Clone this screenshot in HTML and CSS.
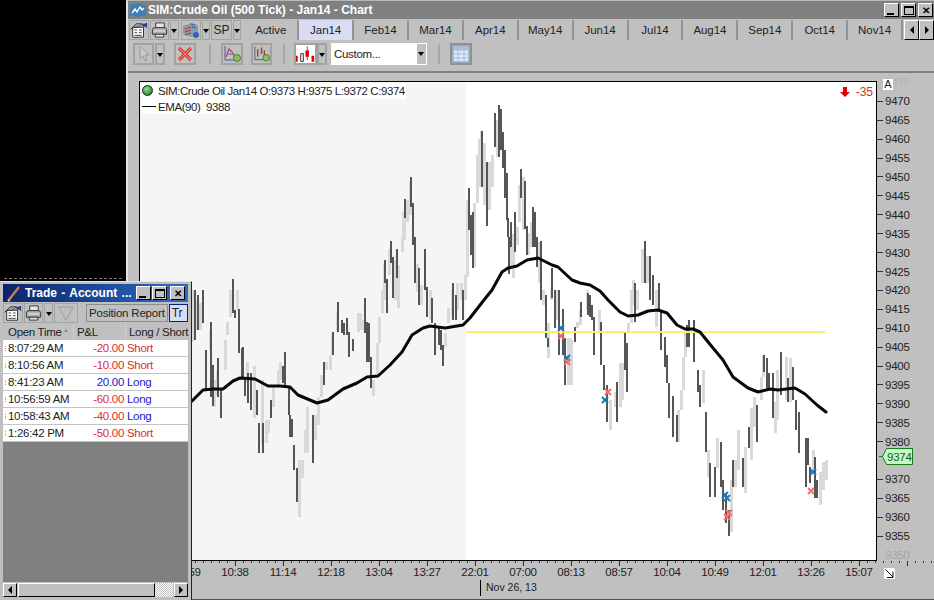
FILE: index.html
```html
<!DOCTYPE html>
<html lang="en">
<head>
  <meta charset="UTF-8" />
  <title>SIM:Crude Oil (500 Tick) - Jan14 - Chart</title>
  <link rel="stylesheet" href="styles.css">
</head>
<body>

  <!-- shared toolbar icons -->
  <svg class="icon-defs" width="0" height="0">
    <defs>
      <symbol id="ico-props" viewBox="0 0 20 18">
        <path d="M3 6h12v11H3z" fill="#fff" stroke="#222"/>
        <path d="M5 9h3M10 9h3M5 12h3M10 12h3M5 15h8" stroke="#333"/>
        <path d="M1 8l6-6h7l-4 4H4z" fill="#9a9a9a" stroke="#222" stroke-width=".8"/>
        <path d="M13 3l6-2v6l-2-2-2 1z" fill="#2a3f8e"/>
      </symbol>
      <symbol id="ico-print" viewBox="0 0 18 18">
        <path d="M5 1.500h9v5H5z" fill="#e8e8e8" stroke="#333"/>
        <path d="M1.500 8.500q0-2 3-2h9q3 0 3 2v5h-15z" fill="#b0b0b0" stroke="#333"/>
        <path d="M3 10h12" stroke="#f0f0f0"/>
        <path d="M4.500 13.500h9v3h-9z" fill="#e8e8e8" stroke="#333"/>
      </symbol>
    </defs>
  </svg>

  <div class="desktop-strip"></div>

  <div class="chart-window">
    <div class="titlebar">
      <svg class="title-icon" width="18" height="16" viewBox="0 0 18 16">
        <path d="M1 3l8-2 8 3v9l-8 2-8-2z" fill="#3d7db8"/>
        <path d="M3 11l3-4 2 3 3-5 2 3 2-2" fill="none" stroke="#fff" stroke-width="1.4"/>
      </svg>
      <span class="title-text">SIM:Crude Oil (500 Tick) - Jan14 - Chart</span>
      <div class="win-buttons">
        <button class="win-btn"><i class="glyph-min"></i></button>
        <button class="win-btn"><i class="glyph-max"></i></button>
        <button class="win-btn win-close">&#10005;</button>
      </div>
    </div>

    <div class="tabs-row">
      <div class="tool-btn tb-props"><svg width="20" height="18"><use href="#ico-props"/></svg></div>
      <div class="tool-btn tb-print"><svg width="18" height="18"><use href="#ico-print"/></svg></div>
      <div class="tool-drop"></div>
      <div class="tool-btn tb-instr">
        <svg width="18" height="18" viewBox="0 0 18 18">
          <path d="M1 5l8-3 7 2v8l-7 4-8-3z" fill="#8e9aa8"/>
          <path d="M3 8l6-2M3 11l6-2M3 14l6-2" stroke="#b04040" stroke-width="1.300"/>
          <path d="M9 3l4 1M10 6l4 1" stroke="#3a70c0" stroke-width="1.300"/>
          <circle cx="14" cy="14" r="3" fill="#2a66b8"/>
        </svg>
      </div>
      <div class="tool-drop"></div>
      <div class="tool-btn tb-sp">SP</div>
      <div class="tool-drop"></div>
      <nav class="tabs">
        <a class="tab">Active</a>
        <a class="tab tab-on">Jan14</a>
        <a class="tab">Feb14</a>
        <a class="tab">Mar14</a>
        <a class="tab">Apr14</a>
        <a class="tab">May14</a>
        <a class="tab">Jun14</a>
        <a class="tab">Jul14</a>
        <a class="tab">Aug14</a>
        <a class="tab">Sep14</a>
        <a class="tab">Oct14</a>
        <a class="tab">Nov14</a>
      </nav>
      <div class="tab-scroll">
        <button class="win-btn scroll-btn"><i class="tri-left"></i></button>
        <button class="win-btn scroll-btn"><i class="tri-right"></i></button>
      </div>
    </div>

    <div class="toolbar">
      <div class="bar-btn">
        <svg width="14" height="18" viewBox="0 0 14 18"><path d="M3 1v13l3-3 2 5 2-1-2-5h4z" fill="#c8c8c8" stroke="#9a9a9a"/></svg>
      </div>
      <div class="bar-drop"></div>
      <div class="bar-btn btn-remove">
        <svg width="16" height="16" viewBox="0 0 16 16"><path d="M2 2l12 12M14 2L2 14" stroke="#e0403a" stroke-width="3.500"/><path d="M2 2l12 12M14 2L2 14" stroke="#f08a80" stroke-width="1"/></svg>
      </div>
      <div class="bar-sep"></div>
      <div class="bar-btn btn-ind">
        <svg width="18" height="18" viewBox="0 0 18 18">
          <path d="M2 1v14h12" fill="none" stroke="#4a5a90"/>
          <path d="M3 12l3-8 3 3 3 5" fill="none" stroke="#b04a6a" stroke-width="1.300"/>
          <path d="M4 9h7" stroke="#4a70c0"/>
          <circle cx="14" cy="13" r="3.500" fill="#8cc060" stroke="#4a7a30"/>
        </svg>
      </div>
      <div class="bar-btn btn-ind2">
        <svg width="18" height="18" viewBox="0 0 18 18">
          <path d="M2 1v14h12" fill="none" stroke="#4a5a90"/>
          <path d="M5 4v8M9 2v7M12 5v6" stroke="#a04040" stroke-width="1.500"/>
          <circle cx="14" cy="13" r="3.500" fill="#8cc060" stroke="#4a7a30"/>
        </svg>
      </div>
      <div class="bar-sep sep-2"></div>
      <div class="bar-btn btn-candle">
        <svg width="22" height="21" viewBox="0 0 22 21">
          <path d="M0 12h2v7H0zM18 12h3v7h-3zM11 6h4v7h-4z" fill="#e00000"/>
          <path d="M13 1v16" stroke="#e00000"/>
          <path d="M5.500 9.500h3v9h-3z" fill="#fff" stroke="#111"/>
        </svg>
      </div>
      <div class="bar-drop drop-candle"></div>
      <div class="combo"><span>Custom...</span><i class="combo-drop"></i></div>
      <div class="bar-sep sep-3"></div>
      <div class="bar-btn btn-table">
        <svg width="18" height="18" viewBox="0 0 18 18">
          <path d="M1 1h16v16H1z" fill="#dfe9f5" stroke="#6f8fc0"/>
          <path d="M2 2h14v3H2z" fill="#a8c0e0"/>
          <path d="M1 5h16M1 9h16M1 13h16M6 5v12M12 5v12" stroke="#a5bcdc"/>
        </svg>
      </div>
    </div>

    <div class="chart-area">
      <div class="plot">
        <svg class="plot-svg" viewBox="140 82 736 478" width="736" height="478" shape-rendering="crispEdges">
          <rect x="140" y="82" width="326" height="478" fill="#f5f5f5"/>
          <path class="bars-light" d="M192 290V342M197 300V330M200 303V330M210 330V350M214 380V407M217 370V395M225 340V370M227 322V335M230 290V317M237 290V310M247 362V383M254 366V418M262 380V445M266 420V443M268 420V433M273 388V407M278 370V385M280 362V380M299 460V517M302 460V478M305 430V453M307 407V453M315 415V440M318 397V425M321 375V397M326 362V370M330 355V370M332 333V355M337 313V332M358 313V332M360 313V330M362 320V330M373 380V396M377 343V377M379 317V343M382 290V313M384 264V300M389 249V275M395 260V300M398 265V308M402 237V252M403 212V237M404 212V240M407 200V222M410 182V215M417 264V292M421 285V305M430 290V320M445 333V347M448 308V323M452 290V318M457 283V310M461 283V300M465 275V300M467 200V277M474 203V267M477 155V203M479 139V187M481 131V176M484 143V205M489 162V210M492 155V187M497 120V157M511 237V267M513 234V278M517 227V245M519 185V222M523 177V230M528 233V255M531 222V247M539 242V283M543 290V305M548 323V358M551 288V300M556 290V320M568 338V385M570 338V385M571 340V385M577 322V328M580 310V325M587 290V310M599 310V333M610 400V430M615 392V407M620 363V407M622 363V400M628 323V333M631 290V323M633 280V305M637 290V310M642 249V283M647 256V283M656 290V327M678 410V442M681 390V410M683 357V390M685 333V357M703 370V403M708 450V477M717 438V468M731 480V532M735 460V487M738 430V470M745 447V493M751 408V460M754 397V427M761 377V400M763 355V377M775 402V433M777 370V420M786 357V400M790 358V402M813 450V473M820 472V505M823 462V490M826 460V480"/>
          <path class="bars-dark" d="M195 290V340M198 295V330M203 290V323M206 350V390M211 322V397M213 365V406M218 358V397M221 390V418M233 279V313M235 310V318M239 309V353M242 348V377M243 347V377M245 377V396M248 373V403M251 373V410M257 390V415M259 423V453M263 423V453M271 400V418M283 366V383M285 352V387M289 387V415M290 415V437M292 419V437M294 445V470M297 468V502M313 415V463M324 362V385M333 332V355M338 302V332M342 320V333M344 323V335M347 318V335M349 332V357M353 339V351M365 298V333M367 322V362M369 323V362M371 357V388M385 260V283M387 279V313M391 241V263M393 257V298M397 249V278M405 199V218M411 177V207M413 203V245M415 237V283M419 268V305M425 249V290M427 287V317M432 298V323M435 323V355M439 328V345M441 330V350M443 345V366M453 283V320M456 295V320M463 290V320M469 188V230M471 215V255M473 212V268M482 131V187M487 162V226M495 113V147M499 105V157M501 109V150M503 132V168M505 150V198M507 173V220M508 218V237M509 237V274M511 222V247M515 212V252M521 169V198M525 181V229M527 226V255M533 207V247M535 212V247M537 237V267M541 241V300M546 295V338M548 338V347M552 268V298M555 290V328M559 290V355M563 309V355M565 338V385M575 327V342M581 302V317M588 293V315M590 295V317M592 305V320M594 317V355M601 322V365M604 365V390M607 385V422M617 382V422M625 333V370M627 343V392M635 283V322M645 241V283M650 256V300M653 275V305M659 283V312M661 310V350M665 337V367M667 355V383M669 383V418M673 396V437M677 415V442M687 325V347M689 320V347M694 320V362M698 370V392M700 385V407M706 412V452M710 463V497M715 467V497M721 442V487M723 480V510M726 493V523M729 510V536M733 460V487M743 458V487M749 427V448M757 405V442M764 355V372M767 358V388M769 373V388M773 373V418M781 352V395M788 378V402M793 367V400M796 400V430M799 412V453M806 438V487M808 438V465M810 467V483M815 457V498M817 480V498"/>
          <path class="level-line" d="M466 332H825"/>
          <g shape-rendering="auto">
            <path class="ema" d="M192 401L203 390 213 389 223 389 233 381 240 378 255 379 268 386 280 386 290 387 298 395 317 403 328 400 343 389 357 383 367 377 378 376 390 365 402 352 412 335 423 328 430 326 445 328 463 325 470 318 484 300 492 290 502 272 508 268 517 266 527 260 538 258 552 265 558 267 572 280 580 283 590 285 600 291 608 300 620 312 628 316 638 315 648 311 658 310 667 313 677 325 685 329 693 329 700 332 713 348 723 360 733 377 748 388 758 392 770 389 778 390 795 388 805 394 817 405 826 412"/>
            <path class="mark-blue" d="M558 325l6 6M564 325l-6 6M564 355l6 6M570 355l-6 6M602 397l6 6M608 397l-6 6M722 492l6 6M728 492l-6 6M724 495l6 6M730 495l-6 6M810 469l6 6M816 469l-6 6"/>
            <path class="mark-red" d="M558 333l6 6M564 333l-6 6M564 359l6 6M570 359l-6 6M605 389l6 6M611 389l-6 6M726 510l6 6M732 510l-6 6M724 514l6 6M730 514l-6 6M808 488l6 6M814 488l-6 6"/>
          </g>
        </svg>

        <div class="legend">
          <div class="legend-row"><i class="led"></i>SIM:Crude Oil Jan14 O:9373 H:9375 L:9372 C:9374</div>
          <div class="legend-row legend-ema"><i class="ema-key"></i>EMA(90)&nbsp; 9388</div>
        </div>
        <div class="delta">
          <svg width="10" height="10" viewBox="0 0 10 10"><path d="M3 0h4v5h3L5 10 0 5h3z" fill="#e00000"/></svg>
          <span>-35</span>
        </div>
      </div>

      <div class="price-axis">
        <span class="price price-off2">9475</span>
        <span class="price">9470</span><span class="price">9465</span><span class="price">9460</span>
        <span class="price">9455</span><span class="price">9450</span><span class="price">9445</span>
        <span class="price">9440</span><span class="price">9435</span><span class="price">9430</span>
        <span class="price">9425</span><span class="price">9420</span><span class="price">9415</span>
        <span class="price">9410</span><span class="price">9405</span><span class="price">9400</span>
        <span class="price">9395</span><span class="price">9390</span><span class="price">9385</span>
        <span class="price">9380</span><span class="price price-gap"></span><span class="price">9370</span>
        <span class="price">9365</span><span class="price">9360</span><span class="price">9355</span>
        <span class="price price-off">9350</span>
        <div class="auto-box">A</div>
        <svg class="last-price" width="38" height="18" viewBox="0 0 38 18">
          <path d="M0 8.500H5" stroke="#1a7a1a"/>
          <path d="M3.500 8.500L7.500 .5H33.500V16.500H7.500z" fill="#c6f7c6" stroke="#1a7a1a"/>
          <text x="8" y="13" class="last-text">9374</text>
        </svg>
      </div>

      <div class="time-axis">
        <div class="time-ticks"></div>
        <div class="time-labels">
          <span>09:59</span><span>10:38</span><span>11:14</span><span>12:18</span><span>13:04</span>
          <span>13:27</span><span>22:01</span><span>07:00</span><span>08:13</span><span>08:57</span>
          <span>10:04</span><span>10:49</span><span>12:01</span><span>13:26</span><span>15:07</span>
        </div>
        <div class="date-row"><span class="date-mark">Nov 26, 13</span></div>
        <svg class="size-grip" width="11" height="11" viewBox="0 0 11 11">
          <rect width="11" height="11" fill="#fff"/>
          <path d="M1.500 1.500L9 9M9 3.500V9.500H3" fill="none" stroke="#111"/>
        </svg>
      </div>
    </div>
  </div>

  <!-- floating trade window -->
  <div class="trade-window">
    <div class="trade-title">
      <svg width="16" height="17" viewBox="0 0 16 17"><path d="M2 16L13 2" stroke="#c87a50" stroke-width="2.500"/><path d="M2 16l2-1" stroke="#fff"/></svg>
      <span class="trade-title-text">Trade - Account ...</span>
      <div class="win-buttons">
        <button class="win-btn"><i class="glyph-min"></i></button>
        <button class="win-btn"><i class="glyph-max"></i></button>
        <button class="win-btn win-close win-close-gap">&#10005;</button>
      </div>
    </div>

    <div class="trade-tools">
      <div class="tool-btn tb-props"><svg width="20" height="18"><use href="#ico-props"/></svg></div>
      <div class="tool-btn tb-print"><svg width="18" height="18"><use href="#ico-print"/></svg></div>
      <div class="tool-drop"></div>
      <div class="tool-btn tb-filter">
        <svg width="18" height="16" viewBox="0 0 18 16"><path d="M2 2h14L9 15z" fill="none" stroke="#a6a6a6" stroke-width="1.300"/></svg>
      </div>
      <div class="report-btn">Position Report</div>
      <div class="report-tab">Tr</div>
    </div>

    <div class="trade-head">
      <div class="col-time">Open Time<i class="sort-caret"></i></div>
      <div class="col-pnl">P&amp;L</div>
      <div class="col-side">Long / Short</div>
    </div>
    <div class="trade-row"><span class="col-time">8:07:29 AM</span><span class="col-pnl neg">-20.00</span><span class="col-side neg">Short</span></div>
    <div class="trade-row"><span class="col-time">8:10:56 AM</span><span class="col-pnl neg">-10.00</span><span class="col-side neg">Short</span></div>
    <div class="trade-row"><span class="col-time">8:41:23 AM</span><span class="col-pnl pos">20.00</span><span class="col-side pos">Long</span></div>
    <div class="trade-row"><span class="col-time">10:56:59 AM</span><span class="col-pnl neg">-60.00</span><span class="col-side pos">Long</span></div>
    <div class="trade-row"><span class="col-time">10:58:43 AM</span><span class="col-pnl neg">-40.00</span><span class="col-side pos">Long</span></div>
    <div class="trade-row"><span class="col-time">1:26:42 PM</span><span class="col-pnl neg">-50.00</span><span class="col-side neg">Short</span></div>

    <div class="trade-empty"></div>

    <div class="hscroll">
      <button class="win-btn hs-btn"><i class="tri-left"></i></button>
      <div class="hs-thumb"></div>
      <div class="hs-track"></div>
      <button class="win-btn hs-btn"><i class="tri-right"></i></button>
    </div>
  </div>

</body>
</html>
```

FILE: styles.css
```css
* {
  margin: 0;
  padding: 0;
  box-sizing: border-box;
  font-family: 'Liberation Sans', Arial, sans-serif;
}

body {
  position: relative;
  width: 934px;
  height: 600px;
  overflow: hidden;
  background: #000;
  color: #222;
  font-size: 12px;
}

.icon-defs {
  position: absolute;
}

/* leftover of a window behind, just above the trade window */
.desktop-strip {
  position: absolute;
  left: 4px;
  top: 278px;
  width: 120px;
  height: 1px;
  background: repeating-linear-gradient(90deg, #777 0 3px, #000 3px 5px);
}

/* main chart window */
.chart-window {
  display: flex;
  flex-direction: column;
  margin-left: 126px;
  width: 808px;
  height: 600px;
  background: #c0c0c0;
  border-left: 2px solid #e2e2e2;
  border-top: 1px solid #b8b8b8;
  border-bottom: 1px solid #555;
}

.titlebar {
  display: flex;
  align-items: center;
  height: 18px;
  padding-left: 1px;
  background: #808080;
  color: #fff;
}

.title-text {
  margin-left: 1px;
  font-size: 12px;
  font-weight: bold;
}

.win-buttons {
  display: flex;
  gap: 1px;
  margin-left: auto;
}

.titlebar .win-buttons {
  padding-right: 1px;
  gap: 2px;
}

.win-btn {
  display: flex;
  align-items: center;
  justify-content: center;
  width: 15px;
  height: 14px;
  background: #c0c0c0;
  border: 1px solid;
  border-color: #fff #000 #000 #fff;
  color: #000;
  font-size: 10px;
  font-weight: bold;
}

.glyph-min {
  width: 7px;
  height: 2px;
  margin-top: 7px;
  margin-right: 2px;
  background: #000;
}

.glyph-max {
  width: 10px;
  height: 9px;
  border: 1px solid #000;
  border-top-width: 2px;
}

.tabs-row {
  display: flex;
  align-items: center;
  height: 20px;
  margin-top: 1px;
  padding-left: 1px;
}

.tool-btn {
  display: flex;
  align-items: center;
  justify-content: center;
  height: 20px;
  border: 1px solid #a4a4a4;
}

.tb-props {
  width: 20px;
}

.tb-print {
  width: 19px;
  margin-left: 1px;
}

.tb-instr {
  width: 20px;
  margin-left: 2px;
}

.tb-sp {
  width: 21px;
  font-size: 12px;
  margin-left: 1px;
}

.tb-filter {
  width: 24px;
  margin-left: 1px;
}

.tool-drop {
  position: relative;
  width: 9px;
  height: 20px;
  margin-left: 1px;
  border: 1px solid #a4a4a4;
}

.tool-drop::after,
.bar-drop::after {
  content: "";
  position: absolute;
  left: 50%;
  top: 8px;
  margin-left: -3px;
  border: 3px solid transparent;
  border-top: 4px solid #000;
  border-bottom: 0;
}

.tabs {
  display: flex;
  margin-left: 3px;
}

.tab {
  display: flex;
  align-items: center;
  justify-content: center;
  width: 54.900px;
  height: 20px;
  border-right: 2px solid #949494;
  font-size: 11.500px;
  letter-spacing: -0.05px;
}

.tab-on {
  background: #d8dcf4;
}

.tab-scroll {
  display: flex;
  margin-left: 1px;
  gap: 0;
}

.scroll-btn {
  width: 15px;
  height: 20px;
}

.tri-left,
.tri-right {
  border: 4px solid transparent;
  border-left-width: 0;
  border-right: 4px solid #000;
}

.tri-right {
  border-right-width: 0;
  border-left: 4px solid #000;
}

/* second row of buttons */
.toolbar {
  display: flex;
  align-items: center;
  height: 33px;
  padding: 0 0 3px 5px;
  border-bottom: 2px solid #808080;
}

.bar-btn {
  display: flex;
  align-items: center;
  justify-content: center;
  width: 21px;
  height: 22px;
  border: 2px solid #a2a2a2;
}

.bar-drop {
  position: relative;
  width: 10px;
  height: 22px;
  margin-left: 1px;
  border: 2px solid #a2a2a2;
}

.btn-remove {
  margin-left: 9px;
  width: 22px;
}

.bar-sep {
  width: 2px;
  height: 20px;
  margin-left: 13px;
  background: #a8a8a8;
}

.btn-ind {
  width: 22px;
  margin-left: 10px;
}

.btn-ind2 {
  margin-left: 8px;
}

.sep-2 {
  margin-left: 11px;
}

.btn-candle {
  width: 23px;
  margin-left: 9px;
  background: #fff;
}

.drop-candle {
  margin-left: 0;
}

.combo {
  display: flex;
  align-items: center;
  justify-content: space-between;
  width: 96px;
  height: 22px;
  margin-left: 4px;
  padding: 0 1px 0 3px;
  background: #fff;
  font-size: 11.500px;
  letter-spacing: -0.3px;
}

.combo-drop {
  position: relative;
  width: 9px;
  height: 20px;
  background: #c0c0c0;
}

.combo-drop::after {
  content: "";
  position: absolute;
  left: 1px;
  top: 8px;
  border: 3px solid transparent;
  border-top: 4px solid #000;
  border-bottom: 0;
}

.sep-3 {
  margin-left: 11px;
}

.btn-table {
  width: 22px;
  margin-left: 10px;
  border-color: #909090;
}

/* chart */
.chart-area {
  display: grid;
  flex: 1;
  grid-template-columns: 738px 1fr;
  grid-template-rows: 480px 1fr;
  padding: 8px 0 0 11px;
  min-height: 0;
}

.plot {
  position: relative;
  background: #fff;
  border: 1px solid #000;
}

.plot-svg {
  display: block;
}

.bars-light,
.bars-dark {
  fill: none;
}

.bars-light {
  stroke: #d9d9d9;
  stroke-width: 3;
}

.bars-dark {
  stroke: #555;
  stroke-width: 2;
}

.level-line {
  fill: none;
  stroke: #f6f26a;
  stroke-width: 2;
}

.ema {
  fill: none;
  stroke: #080808;
  stroke-width: 3;
  stroke-linejoin: round;
  stroke-linecap: round;
}

.mark-blue,
.mark-red {
  fill: none;
  stroke-width: 2;
}

.mark-blue {
  stroke: #1a78b4;
}

.mark-red {
  stroke: #f07070;
}

.legend {
  position: absolute;
  left: 2px;
  top: 1px;
  font-size: 11.500px;
  letter-spacing: -0.42px;
}

.legend-row {
  display: flex;
  align-items: center;
  width: max-content;
  height: 16px;
  padding-right: 1px;
  background: #fff;
}

.legend-ema {
  height: 15px;
}

.led {
  width: 11px;
  height: 11px;
  margin: 0 5px 2px 0;
  background: radial-gradient(circle at 40% 35%, #8fe08f, #2f8f2f 70%);
  border: 1px solid #222;
  border-radius: 50%;
}

.ema-key {
  width: 14px;
  height: 1px;
  margin-right: 2px;
  background: #000;
}

.delta {
  position: absolute;
  top: 3px;
  right: 3px;
  display: flex;
  align-items: center;
  gap: 6px;
  color: #d83030;
  font-size: 12px;
}

.price-axis {
  position: relative;
  display: flex;
  flex-direction: column;
  margin-top: -8px;
  height: 492px;
  z-index: 1;
}

.price {
  display: flex;
  align-items: center;
  flex: 0 0 18.920px;
  gap: 2px;
  font-size: 11.500px;
  letter-spacing: -0.25px;
}

.price::before {
  content: "";
  width: 6px;
  height: 1px;
  background: #333;
}

.price-gap::before {
  background: transparent;
}

.price-off {
  color: #a6a6a6;
}

.price-off2 {
  color: #b4b4b4;
}

.price-off::before,
.price-off2::before {
  background: transparent;
}

.auto-box {
  position: absolute;
  left: 6px;
  top: 6px;
  width: 10px;
  height: 11px;
  background: #fff;
  font-size: 11px;
  line-height: 11px;
  text-align: center;
}

.last-price {
  position: absolute;
  left: 2px;
  top: 375px;
}

.last-text {
  font-size: 11.500px;
  letter-spacing: -0.25px;
  fill: #135e13;
}

.time-axis {
  position: relative;
  grid-column: 1 / 3;
  overflow: hidden;
}

.time-ticks {
  height: 5px;
  background:
    repeating-linear-gradient(90deg, #333 0 1px, transparent 1px 48px) 0 0 / 100% 5px no-repeat,
    repeating-linear-gradient(90deg, #333 0 1px, transparent 1px 8px) 0 0 / 100% 2px no-repeat;
}

.time-labels {
  display: flex;
  height: 13px;
  margin-left: 24px;
}

.time-labels span {
  flex: 0 0 48px;
  font-size: 11.500px;
  letter-spacing: -0.25px;
  text-align: center;
}

.date-row {
  margin-top: 1px;
  padding-left: 341px;
}

.date-mark {
  display: block;
  padding: 1px 0 3px 5px;
  border-left: 1px solid #000;
  font-size: 10.500px;
  line-height: 12px;
}

.size-grip {
  position: absolute;
  right: 39px;
  top: 7px;
}

/* trade window, floating over the chart */
.trade-window {
  position: absolute;
  left: 0;
  top: 281px;
  display: flex;
  flex-direction: column;
  width: 192px;
  height: 319px;
  padding: 2px 3px 2px;
  background: #c0c0c0;
  border-right: 1px solid #222;
  border-top: 1px solid #e6e6e6;
}

.trade-title {
  display: flex;
  align-items: center;
  flex: 0 0 18px;
  padding: 0 3px 0 3px;
  background: linear-gradient(90deg, #0a246a, #2f6cc4);
  color: #fff;
}

.trade-title-text {
  margin-left: 3px;
  font-size: 12px;
  font-weight: bold;
  word-spacing: 1px;
  white-space: nowrap;
}

.win-close-gap {
  margin-left: 2px;
}

.trade-tools {
  display: flex;
  align-items: center;
  flex: 0 0 21px;
}

.report-btn {
  display: flex;
  align-items: center;
  height: 18px;
  margin-left: 8px;
  padding: 0 2px;
  border: 1px solid #8c8c8c;
  font-size: 11.500px;
  letter-spacing: -0.2px;
  white-space: nowrap;
}

.report-tab {
  flex: 1;
  height: 18px;
  margin-left: 1px;
  padding-left: 2px;
  overflow: hidden;
  background: #d8dcf4;
  border: 1px solid #0a246a;
  font-size: 12px;
  line-height: 16px;
}

.trade-head,
.trade-row {
  display: flex;
  align-items: center;
  font-size: 11.500px;
  letter-spacing: -0.3px;
  white-space: nowrap;
}

.trade-head {
  flex: 0 0 16px;
  margin-top: 1px;
}

.trade-head > div {
  height: 100%;
  line-height: 16px;
}

.trade-head > div + div {
  border-left: 1px solid #cfcfcf;
}

.trade-row {
  position: relative;
  flex: 0 0 17px;
  background: #fff;
  border-bottom: 1px solid #c4c4c4;
}

.trade-row::before {
  content: "";
  position: absolute;
  left: 2px;
  top: 6px;
  height: 5px;
  border-left: 1px dotted #c09060;
}

.col-time {
  flex: 0 0 70px;
  padding-left: 5px;
}

.col-pnl {
  flex: 0 0 52px;
  padding-left: 3px;
}

.trade-row .col-pnl {
  padding: 0 1px 0 0;
  text-align: right;
}

.col-side {
  padding-left: 3px;
}

.trade-row .col-side {
  padding-left: 2px;
}

.neg {
  color: #dc2c2c;
}

.pos {
  color: #2020c4;
}

.sort-caret {
  display: inline-block;
  margin: 0 0 4px 2px;
  border: 2px solid transparent;
  border-top: 0;
  border-bottom: 3px solid #8a8a8a;
}

.trade-empty {
  flex: 1;
  background: #808080;
}

.hscroll {
  display: flex;
  flex: 0 0 15px;
  align-items: stretch;
  gap: 1px;
  padding-bottom: 1px;
  border-top: 1px solid #c0c0c0;
}

.hs-btn {
  width: 14px;
  height: 14px;
}

.hs-thumb {
  width: 137px;
  background: #c0c0c0;
  border: 1px solid;
  border-color: #fff #000 #000 #fff;
}

.hs-track {
  flex: 1;
  margin-left: -1px;
  background: repeating-conic-gradient(#fff 0 25%, #c0c0c0 0 50%) 0 0 / 2px 2px;
}
```
